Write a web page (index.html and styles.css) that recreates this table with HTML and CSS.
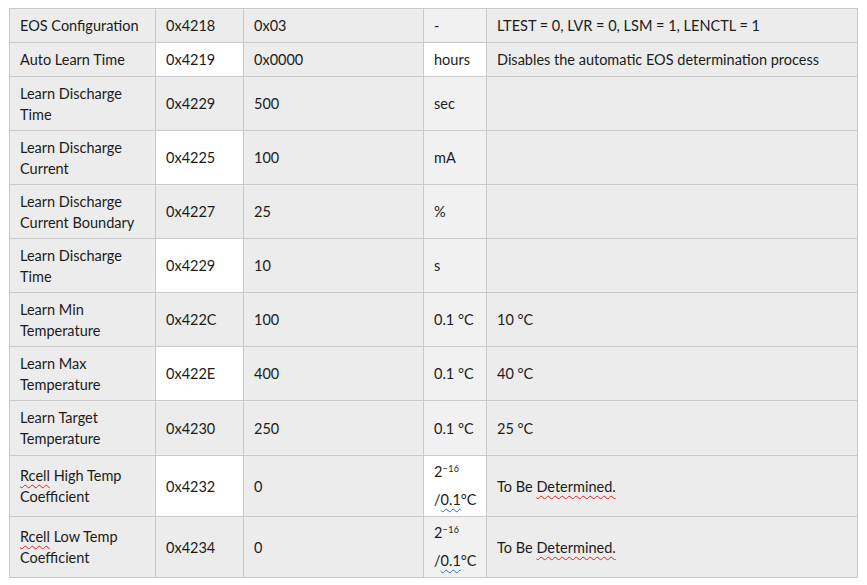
FILE: index.html
```html
<!DOCTYPE html>
<html>
<head>
<meta charset="utf-8">
<link rel="stylesheet" href="styles.css">
</head>
<body>
<div class="page">
<table class="reg">
  <colgroup>
    <col class="c1"><col class="c2"><col class="c3"><col class="c4"><col class="c5">
  </colgroup>
  <tr class="r34">
    <td>EOS Configuration</td><td>0x4218</td><td>0x03</td><td class="unit">-</td><td>LTEST = 0, LVR = 0, LSM = 1, LENCTL = 1</td>
  </tr>
  <tr class="r34">
    <td>Auto Learn Time</td><td class="w">0x4219</td><td>0x0000</td><td class="w">hours</td><td>Disables the automatic EOS determination process</td>
  </tr>
  <tr class="r54">
    <td>Learn Discharge<br>Time</td><td>0x4229</td><td>500</td><td class="unit">sec</td><td></td>
  </tr>
  <tr class="r54">
    <td>Learn Discharge<br>Current</td><td class="w">0x4225</td><td>100</td><td class="unit">mA</td><td></td>
  </tr>
  <tr class="r54">
    <td>Learn Discharge<br>Current Boundary</td><td>0x4227</td><td>25</td><td class="unit">%</td><td></td>
  </tr>
  <tr class="r54">
    <td>Learn Discharge<br>Time</td><td class="w">0x4229</td><td>10</td><td class="unit">s</td><td></td>
  </tr>
  <tr class="r54">
    <td>Learn Min<br>Temperature</td><td>0x422C</td><td>100</td><td class="unit">0.1 °C</td><td>10 °C</td>
  </tr>
  <tr class="r54">
    <td>Learn Max<br>Temperature</td><td class="w">0x422E</td><td>400</td><td class="unit">0.1 °C</td><td>40 °C</td>
  </tr>
  <tr class="r55">
    <td>Learn Target<br>Temperature</td><td>0x4230</td><td>250</td><td class="unit">0.1 °C</td><td>25 °C</td>
  </tr>
  <tr class="r61">
    <td><span class="sp">Rcell</span> High Temp<br>Coefficient</td><td class="w">0x4232</td><td>0</td><td class="w exp">2<sup>−16</sup><br>/<span class="gr">0.1</span>°C</td><td>To Be <span class="sp">Determined.</span></td>
  </tr>
  <tr class="r61">
    <td><span class="sp">Rcell</span> Low Temp<br>Coefficient</td><td>0x4234</td><td>0</td><td class="unit exp">2<sup>−16</sup><br>/<span class="gr">0.1</span>°C</td><td>To Be <span class="sp">Determined.</span></td>
  </tr>
</table>
<div class="endmark"></div>
</div>
</body>
</html>
```

FILE: styles.css
```css
html, body {
  margin: 0;
  padding: 0;
  background: #ffffff;
}
body {
  padding: 8px 0 0 9px;
  font-family: Lato, "Open Sans", sans-serif;
  font-size: 14.5px;
  color: #1b1b1b;
}
.page {
  position: relative;
  width: 848px;
}
.reg {
  border-collapse: collapse;
  table-layout: fixed;
  width: 848px;
}
.c1 { width: 146px; }
.c2 { width: 88px; }
.c3 { width: 180px; }
.c4 { width: 63px; }
.c5 { width: 371px; }
.reg td {
  border: 1px solid #c9c9c9;
  background: #ececec;
  padding: 0 0 0 10px;
  vertical-align: middle;
  line-height: 21px;
  white-space: nowrap;
}
.reg td.unit { background: #f1f1f1; }
.reg td.w { background: #ffffff; }
.r34 td { height: 33px; }
.r54 td { height: 53px; }
.r55 td { height: 54px; }
.r61 td { height: 60px; }
.reg td.exp { line-height: 28px; }
.exp sup {
  font-size: 9px;
  vertical-align: 5px;
  line-height: 0;
  letter-spacing: 0.5px;
}
.sp {
  text-decoration: underline wavy #e02020;
  text-decoration-thickness: 1px;
  text-underline-offset: 3px;
}
.gr {
  text-decoration: underline wavy #3b6fd6;
  text-decoration-thickness: 1px;
  text-underline-offset: 3px;
}
.endmark {
  position: absolute;
  left: 848px;
  top: 570px;
  width: 12px;
  height: 10px;
  border-top: 1px solid #a8a8a8;
  border-left: 1px solid #a8a8a8;
}
```
